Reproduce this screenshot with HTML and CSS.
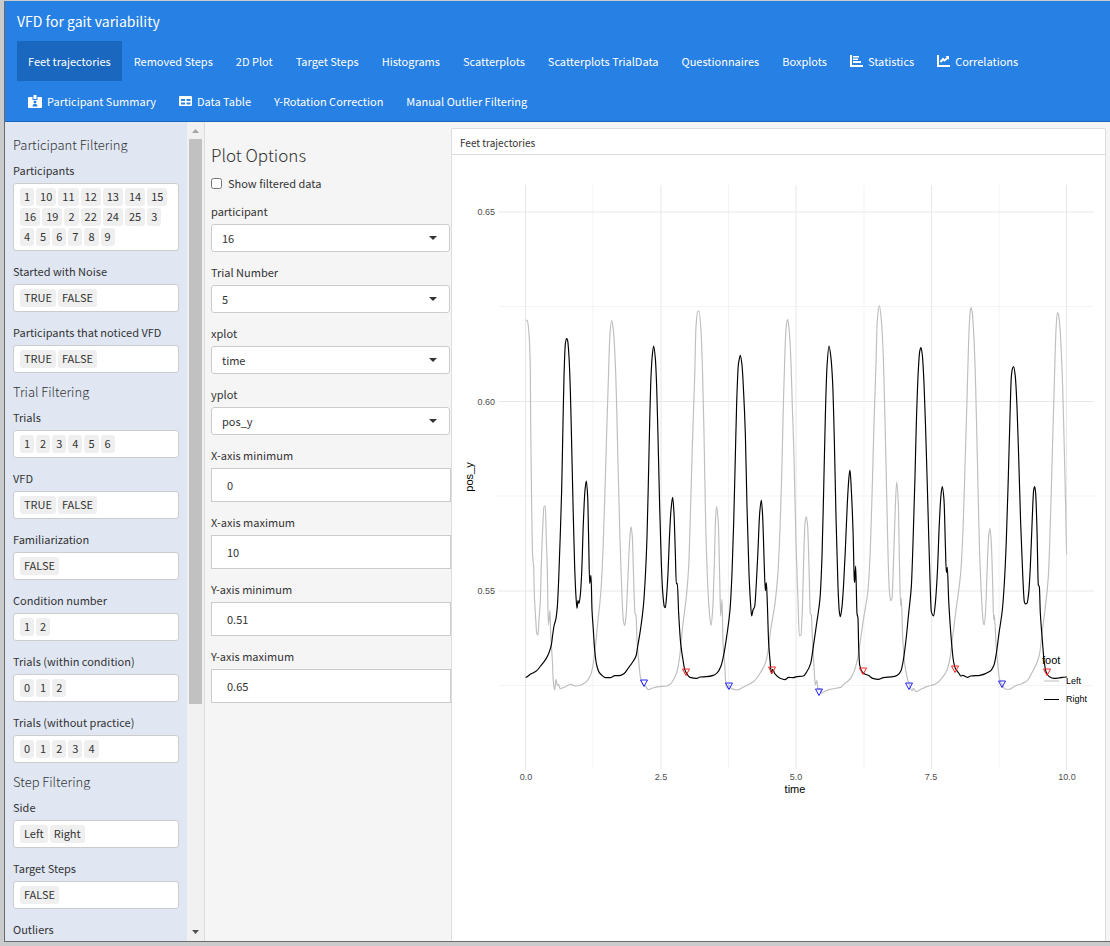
FILE: index.html
```html
<!DOCTYPE html>
<html lang="en">
<head>
<meta charset="utf-8">
<title>VFD for gait variability</title>
<link rel="stylesheet" href="styles.css">
</head>
<body>
<div class="window">
  <header class="topbar">
    <div class="brand">VFD for gait variability</div>
    <nav class="tabs">
      <a class="tab active" href="#feet">Feet trajectories</a>
      <a class="tab" href="#removed">Removed Steps</a>
      <a class="tab" href="#plot2d">2D Plot</a>
      <a class="tab" href="#target">Target Steps</a>
      <a class="tab" href="#hist">Histograms</a>
      <a class="tab" href="#scatter">Scatterplots</a>
      <a class="tab" href="#scatter-trial">Scatterplots TrialData</a>
      <a class="tab" href="#questionnaires">Questionnaires</a>
      <a class="tab" href="#boxplots">Boxplots</a>
      <a class="tab" href="#statistics"><svg class="icon" viewBox="0 0 13 12"><path d="M1 0v11h12" fill="none" stroke="currentColor" stroke-width="2"/><path d="M3 1h6v1.500H3zM3 3.500h5V5H3zM3 6h8v2H3z" fill="currentColor"/></svg>Statistics</a>
      <a class="tab" href="#correlations"><svg class="icon" viewBox="0 0 13 12"><path d="M1 0v11h12M3.500 7L6 4l1.500 1.500L11 2.500" fill="none" stroke="currentColor" stroke-width="2"/><path d="M8.500 1H12v4z" fill="currentColor"/></svg>Correlations</a>
      <a class="tab" href="#summary"><svg class="icon wide" viewBox="0 0 14 13"><path fill="currentColor" d="M1 2h12q1 0 1 1v9q0 1-1 1H1q-1 0-1-1V3q0-1 1-1zM5.500 0h3v3h-3z"/><path fill="#2780e3" d="M4.500 2h1v2h3V2h1v3h-5zM7 5.500a1.500 1.500 0 1 1-.01 0zM4.500 11.500q0-2.500 1.500-2.500h2q1.500 0 1.500 2.500z"/></svg>Participant Summary</a>
      <a class="tab" href="#table"><svg class="icon" viewBox="0 0 13 12"><path fill="currentColor" fill-rule="evenodd" d="M1 1h11q1 0 1 1v8q0 1-1 1H1q-1 0-1-1V2q0-1 1-1zM2 4v2h4V4zM7.500 4v2h4V4zM2 7.500v2h4v-2zM7.500 7.500v2h4v-2z"/></svg>Data Table</a>
      <a class="tab" href="#rotation">Y-Rotation Correction</a>
      <a class="tab" href="#outliers">Manual Outlier Filtering</a>
    </nav>
  </header>

  <div class="content">
    <aside class="sidebar">
      <div class="filters">
        <h2 class="section">Participant Filtering</h2>
        <div class="field"><span class="label">Participants</span>
          <div class="box chips"><span class="chip">1</span><span class="chip">10</span><span class="chip">11</span><span class="chip">12</span><span class="chip">13</span><span class="chip">14</span><span class="chip">15</span><span class="chip">16</span><span class="chip">19</span><span class="chip">2</span><span class="chip">22</span><span class="chip">24</span><span class="chip">25</span><span class="chip">3</span><span class="chip">4</span><span class="chip">5</span><span class="chip">6</span><span class="chip">7</span><span class="chip">8</span><span class="chip">9</span></div></div>
        <div class="field"><span class="label">Started with Noise</span>
          <div class="box chips"><span class="chip">TRUE</span><span class="chip">FALSE</span></div></div>
        <div class="field"><span class="label">Participants that noticed VFD</span>
          <div class="box chips"><span class="chip">TRUE</span><span class="chip">FALSE</span></div></div>
        <h2 class="section">Trial Filtering</h2>
        <div class="field"><span class="label">Trials</span>
          <div class="box chips"><span class="chip">1</span><span class="chip">2</span><span class="chip">3</span><span class="chip">4</span><span class="chip">5</span><span class="chip">6</span></div></div>
        <div class="field"><span class="label">VFD</span>
          <div class="box chips"><span class="chip">TRUE</span><span class="chip">FALSE</span></div></div>
        <div class="field"><span class="label">Familiarization</span>
          <div class="box chips"><span class="chip">FALSE</span></div></div>
        <div class="field"><span class="label">Condition number</span>
          <div class="box chips"><span class="chip">1</span><span class="chip">2</span></div></div>
        <div class="field"><span class="label">Trials (within condition)</span>
          <div class="box chips"><span class="chip">0</span><span class="chip">1</span><span class="chip">2</span></div></div>
        <div class="field"><span class="label">Trials (without practice)</span>
          <div class="box chips"><span class="chip">0</span><span class="chip">1</span><span class="chip">2</span><span class="chip">3</span><span class="chip">4</span></div></div>
        <h2 class="section">Step Filtering</h2>
        <div class="field"><span class="label">Side</span>
          <div class="box chips"><span class="chip">Left</span><span class="chip">Right</span></div></div>
        <div class="field"><span class="label">Target Steps</span>
          <div class="box chips"><span class="chip">FALSE</span></div></div>
        <div class="field"><span class="label">Outliers</span>
          <div class="box chips"></div></div>
      </div>
      <div class="scrollbar">
        <svg class="arrow up" viewBox="0 0 7 4"><path d="M0 4L3.500 0 7 4z" fill="#a3a3a3"/></svg>
        <div class="track"><div class="thumb"></div></div>
        <svg class="arrow down" viewBox="0 0 7 4"><path d="M0 0h7L3.500 4z" fill="#505050"/></svg>
      </div>
    </aside>

    <section class="options">
      <h1 class="title">Plot Options</h1>
      <label class="check"><input type="checkbox">Show filtered data</label>
      <div class="field"><label class="label" for="participant">participant</label>
        <div class="select"><select class="box" id="participant"><option>16</option></select></div></div>
      <div class="field"><label class="label" for="trial">Trial Number</label>
        <div class="select"><select class="box" id="trial"><option>5</option></select></div></div>
      <div class="field"><label class="label" for="xplot">xplot</label>
        <div class="select"><select class="box" id="xplot"><option>time</option></select></div></div>
      <div class="field"><label class="label" for="yplot">yplot</label>
        <div class="select"><select class="box" id="yplot"><option>pos_y</option></select></div></div>
      <div class="field"><label class="label" for="xmin">X-axis minimum</label>
        <input class="number" id="xmin" type="text" value="0"></div>
      <div class="field"><label class="label" for="xmax">X-axis maximum</label>
        <input class="number" id="xmax" type="text" value="10"></div>
      <div class="field"><label class="label" for="ymin">Y-axis minimum</label>
        <input class="number" id="ymin" type="text" value="0.51"></div>
      <div class="field"><label class="label" for="ymax">Y-axis maximum</label>
        <input class="number" id="ymax" type="text" value="0.65"></div>
    </section>

    <main class="main">
      <div class="card">
        <h2 class="card-head">Feet trajectories</h2>
        <svg class="chart" viewBox="452 155 653 786">
          <g class="grid minor">
            <path d="M593 185V769M728.500 185V769M864 185V769M999 185V769M498 306.500H1094M498 496H1094M498 685.500H1094"/>
          </g>
          <g class="grid major">
            <path d="M525.500 185V769M661 185V769M796 185V769M931.500 185V769M1066.500 185V769M498 212H1094M498 401.500H1094M498 591H1094"/>
          </g>
          <g transform="translate(500 290) scale(.33333)">
            <path class="line left" id="left"/>
            <path class="line right" id="right"/>
          </g>
          <g id="red" class="mark red"></g>
          <g id="blue" class="mark blue"></g>
          <g class="tick end">
            <text x="495" y="215">0.65</text><text x="495" y="405">0.60</text><text x="495" y="594">0.55</text>
          </g>
          <g class="tick mid">
            <text x="526" y="780">0.0</text><text x="661" y="780">2.5</text><text x="796" y="780">5.0</text><text x="931" y="780">7.5</text><text x="1067" y="780">10.0</text>
          </g>
          <text class="axis mid" x="795" y="793">time</text>
          <text class="axis mid" transform="translate(473 477) rotate(-90)">pos_y</text>
          <text class="axis" x="1042" y="664">foot</text>
          <path d="M1044 681h15" stroke="#bebebe"/>
          <path d="M1044 699.500h15" stroke="#000"/>
          <text class="key" x="1066" y="684">Left</text>
          <text class="key" x="1066" y="702">Right</text>
        </svg>
      </div>
    </main>
  </div>
</div>
<script src="chart.js"></script>
</body>
</html>
```

FILE: styles.css
```css
* { box-sizing: border-box; }
body {
  margin: 0;
  height: 100vh;
  padding: 1px 0 4px 4px;
  background: #c9cbcc;
  color: #333;
  font: 11px/18px "Noto Sans CJK SC", "Noto Sans", sans-serif;
  overflow: hidden;
}
h1, h2 { margin: 0; font-weight: 300; }
.window {
  height: 100%;
  display: flex;
  flex-direction: column;
  border-left: 1px solid #6b6b6b;
  border-bottom: 1px solid #6b6b6b;
  background: #f5f5f5;
}
.topbar {
  flex: none;
  background: #2780e3;
  border-bottom: 1px solid #1967be;
  padding: 0 12px;
  color: #fff;
}
.brand { font-size: 14px; line-height: 40px; }
.tabs { display: flex; flex-wrap: wrap; column-gap: 1px; }
.tab {
  display: flex;
  align-items: center;
  height: 40px;
  padding: 0 11px;
  color: #fff;
  font-size: 11px;
  text-decoration: none;
  white-space: nowrap;
}
.tab.active { background: #1967be; }
.icon { width: 13px; height: 12px; margin-right: 5px; }
.icon.wide { width: 14px; height: 13px; }
.content { flex: 1; min-height: 0; display: flex; }
.sidebar {
  flex: none;
  width: 200px;
  display: flex;
  overflow: hidden;
  border-right: 1px solid #dcdcdc;
}
.filters {
  flex: 1;
  min-width: 0;
  padding: 15px 8px 0;
  background: #e0e7f3;
}
.section { font-size: 13px; line-height: 16px; margin-bottom: 8px; font-weight: 200; }
.field { margin-bottom: 11px; }
.label { display: block; margin-bottom: 4px; white-space: nowrap; }
.box {
  border: 1px solid #ccc;
  border-radius: 3px;
  background: #fff;
}
.chips { display: flex; flex-wrap: wrap; gap: 2px; min-height: 28px; padding: 4px 6px; }
.chip {
  height: 18px;
  padding: 0 4px;
  border-radius: 3px;
  background: #efefef;
  line-height: 17px;
}
.scrollbar {
  flex: none;
  width: 17px;
  display: flex;
  flex-direction: column;
  align-items: center;
  padding: 7px 0;
  background: #f1f1f1;
}
.arrow { flex: none; width: 7px; height: 4px; }
.track { flex: 1; width: 13px; margin: 6px 0; }
.thumb { height: 72%; background: #c1c1c1; }
.options { flex: none; width: 246px; padding: 23px 0 0 6px; }
.title { font-size: 17px; line-height: 20px; margin-bottom: 9px; font-weight: 200; }
.check { display: flex; align-items: center; margin-bottom: 10px; }
.check input { width: 11px; height: 11px; margin: 0 6px 0 0; }
.select { position: relative; margin-right: 1px; }
.select::after {
  content: "";
  position: absolute;
  right: 13px;
  top: 12px;
  border: 4px solid transparent;
  border-top-color: #333;
  border-bottom: 0;
  pointer-events: none;
}
select.box {
  display: block;
  appearance: none;
  width: 100%;
  height: 28px;
  padding: 0 10px;
  color: #333;
  font: inherit;
}
.number {
  display: block;
  width: 100%;
  height: 34px;
  padding: 0 15px;
  border: 1px solid #ccc;
  background: #fff;
  color: #333;
  font: inherit;
}
.main { flex: 1; min-width: 0; padding: 6px 4px 0 0; }
.card {
  height: 100%;
  overflow: hidden;
  border: 1px solid #ddd;
  border-bottom: 0;
  border-radius: 2px 2px 0 0;
  background: #fff;
}
.card-head {
  padding: 5px 8px 2px;
  border-bottom: 1px solid #ddd;
  font-size: 10px;
  font-weight: 400;
}
.chart { display: block; width: 100%; font-family: "Liberation Sans", sans-serif; }
.grid { fill: none; }
.grid.major { stroke: #e8e8e8; stroke-width: 1; }
.grid.minor { stroke: #f3f3f3; stroke-width: 1; }
.line { fill: none; stroke-width: 3.5; stroke-linejoin: round; }
.line.left { stroke: #bebebe; }
.line.right { stroke: #000; }
.mark { fill: none; stroke-width: 1; }
.red { stroke: #f22; }
.blue { stroke: #22f; }
.tick { font-size: 9px; fill: #4d4d4d; }
.axis { font-size: 11px; }
.key { font-size: 9px; }
.mid { text-anchor: middle; }
.end { text-anchor: end; }
```

FILE: chart.js
```js
// Trajectory samples as x,y pairs in plot units (three per pixel).
const right = `77,1162 92,1152 108,1144 122,1128 137,1108 147,1088 154,1065 158,1035 162,1008 168,985 172,950 176,870 181,730 185,600 189,400 192,260 196,162 200,145 203,152 207,200 211,300 214,420 219,640 224,830 228,920 231,955 234,932 237,940 241,915 245,850 250,700 255,600 259,573 263,620 266,750 269,880 273,856 276,960 280,1020 284,1080 290,1125 298,1148 306,1156 316,1163 330,1163 345,1157 358,1157 373,1150 385,1134 398,1116 408,1098 413,1070 422,1015 430,950 436,860 441,740 445,580 449,400 453,260 457,195 461,168 466,205 470,290 474,440 479,650 484,820 488,905 493,950 496,953 500,915 504,850 508,750 513,660 518,622 522,670 526,790 529,882 532,880 536,970 542,1060 549,1110 554,1138 563,1155 570,1162 590,1165 600,1161 620,1160 640,1156 652,1148 663,1128 672,1090 680,1040 690,960 696,850 701,700 706,500 710,340 715,225 719,202 721,196 726,225 731,310 736,430 741,650 747,850 751,930 755,978 759,960 764,950 769,880 774,780 779,670 784,630 788,680 792,800 796,902 799,878 802,940 806,1060 810,1110 814,1150 818,1138 825,1152 840,1165 855,1169 866,1162 880,1163 890,1160 910,1158 920,1146 932,1120 940,1070 950,1000 960,925 966,800 971,600 976,380 981,230 987,168 993,205 998,280 1003,450 1008,680 1014,890 1018,965 1021,980 1026,950 1031,880 1036,780 1042,640 1047,560 1050,540 1054,600 1059,720 1063,870 1064,878 1067,828 1071,970 1074,985 1076,1070 1079,1125 1086,1145 1094,1152 1105,1156 1118,1165 1135,1168 1150,1163 1180,1160 1192,1156 1203,1142 1210,1110 1218,1050 1226,970 1234,890 1239,760 1245,560 1249,400 1255,240 1259,185 1263,173 1267,195 1272,280 1277,420 1284,660 1290,870 1294,965 1301,978 1306,940 1312,850 1318,700 1323,615 1327,590 1332,630 1336,760 1339,848 1342,832 1346,930 1354,1050 1360,1110 1366,1135 1378,1152 1382,1158 1388,1156 1402,1162 1412,1158 1440,1156 1470,1144 1482,1125 1489,1090 1497,1030 1507,960 1513,880 1519,750 1525,560 1530,380 1534,260 1538,234 1541,230 1546,260 1551,350 1556,500 1562,700 1568,850 1573,935 1576,942 1581,940 1586,910 1591,830 1597,680 1601,600 1604,590 1607,610 1611,720 1615,885 1618,890 1621,970 1627,1050 1632,1110 1638,1145 1648,1160 1662,1165 1676,1164 1688,1162 1701,1161`;
const left = `77,90 82,92 87,130 91,240 92,400 95,650 98,800 101,830 103,915 108,1000 110,1030 114,1035 117,990 121,930 124,820 127,740 132,650 136,648 139,750 142,840 145,1005 150,962 152,1030 157,1110 160,1175 164,1200 168,1168 172,1186 176,1183 180,1196 195,1191 212,1183 228,1188 245,1184 260,1174 272,1155 279,1125 285,1080 292,1010 303,900 309,780 315,600 320,430 325,270 330,130 335,92 340,120 346,220 350,350 354,520 360,750 366,920 370,990 374,1007 378,980 383,880 388,770 393,710 397,740 401,870 405,970 408,975 411,1050 416,1110 421,1160 427,1180 436,1188 445,1199 458,1194 475,1190 500,1188 510,1183 522,1166 531,1145 539,1100 548,1010 560,910 566,830 571,680 577,470 584,260 588,110 593,65 597,63 603,120 608,260 612,430 617,700 623,880 628,965 633,1006 638,960 643,820 647,680 650,650 655,700 659,860 662,978 666,928 669,1060 674,1120 677,1175 682,1195 686,1185 695,1196 712,1200 730,1191 750,1181 763,1173 780,1150 796,1120 804,1085 812,1020 825,940 833,860 840,720 845,560 850,350 855,180 859,105 863,88 868,125 873,220 877,350 882,500 888,760 894,930 898,1037 903,1035 907,960 911,810 915,700 919,680 923,710 927,830 931,970 934,975 937,1040 942,1130 946,1185 950,1172 955,1200 959,1195 965,1210 972,1205 990,1198 1022,1192 1030,1184 1050,1167 1062,1145 1072,1110 1080,1060 1090,990 1104,900 1110,800 1116,620 1122,400 1128,220 1132,90 1138,47 1144,90 1150,200 1154,350 1158,520 1164,790 1168,900 1172,932 1176,925 1180,830 1185,680 1190,576 1195,640 1198,800 1202,948 1204,925 1208,1040 1214,1120 1222,1165 1230,1190 1236,1202 1240,1195 1248,1205 1262,1198 1280,1190 1308,1181 1325,1165 1341,1140 1350,1105 1358,1040 1368,960 1382,850 1389,720 1395,530 1401,330 1406,150 1410,70 1413,53 1417,70 1423,170 1427,290 1432,500 1438,760 1445,930 1450,998 1453,1005 1457,960 1461,850 1466,740 1470,715 1474,760 1478,880 1481,990 1483,975 1488,1060 1493,1120 1498,1165 1507,1185 1515,1197 1528,1198 1545,1188 1565,1181 1582,1172 1595,1150 1610,1120 1619,1090 1626,1030 1635,960 1645,860 1651,700 1657,490 1663,280 1668,120 1672,68 1676,75 1681,130 1688,290 1692,440 1697,650 1700,795`;

// Cubic path whose vertical slope is flat at each turning point.
function curve(text) {
  const p = text.split(" ").map(s => s.split(",").map(Number));
  const slope = p.map((q, i) => {
    if (i === 0 || i === p.length - 1) return 0;
    const a = (q[1] - p[i - 1][1]) / (q[0] - p[i - 1][0]);
    const b = (p[i + 1][1] - q[1]) / (p[i + 1][0] - q[0]);
    return a * b <= 0 ? 0 : 2 * a * b / (a + b);
  });
  let d = "M" + p[0];
  for (let i = 1; i < p.length; i++) {
    const h = (p[i][0] - p[i - 1][0]) / 3;
    d += `C${p[i - 1][0] + h},${p[i - 1][1] + slope[i - 1] * h} ${p[i][0] - h},${p[i][1] - slope[i] * h} ${p[i]}`;
  }
  return d;
}
document.getElementById("right").setAttribute("d", curve(right));
document.getElementById("left").setAttribute("d", curve(left));

const marks = {
  red: [[686, 672], [772, 670], [863, 671], [955, 669], [1047, 672]],
  blue: [[644, 683], [729, 686], [819, 692], [909, 686], [1002, 684]]
};
for (const id in marks) {
  document.getElementById(id).innerHTML = marks[id]
    .map(([x, y]) => `<path d="M${x - 3.5} ${y - 3}h7l-3.500 6.500z"/>`).join("");
}
```
